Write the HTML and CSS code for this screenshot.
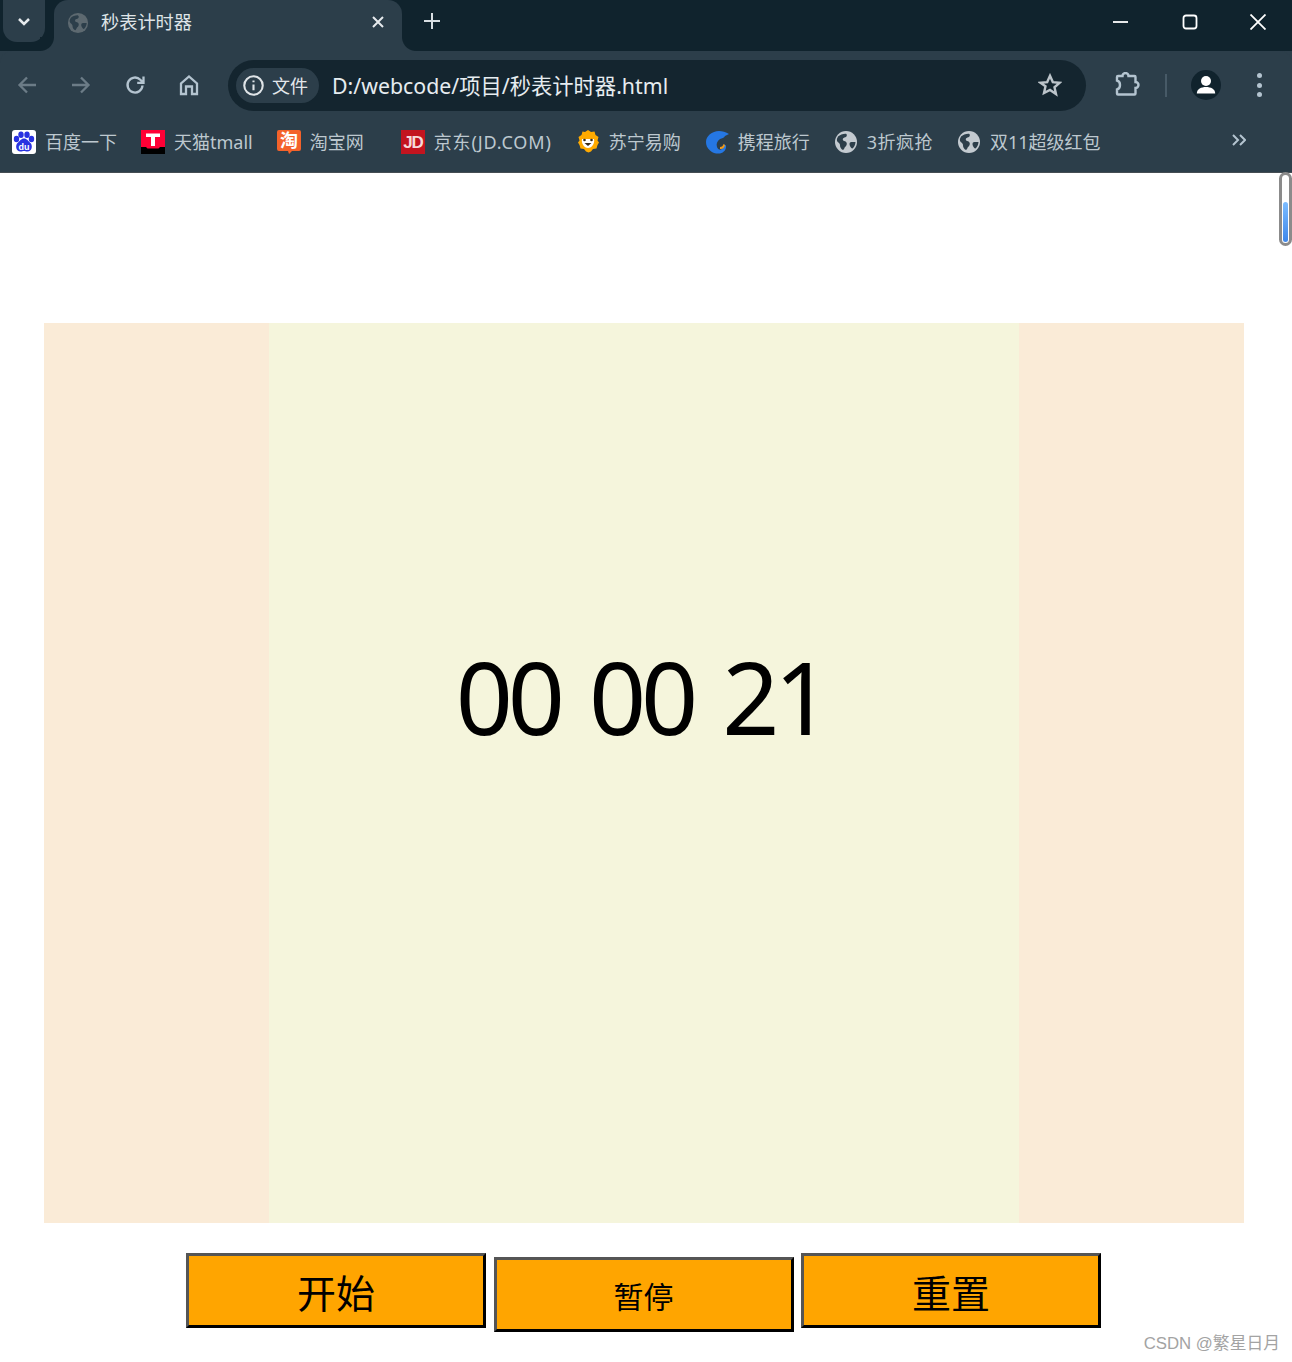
FILE: index.html
```html
<!DOCTYPE html>
<html lang="zh">
<head>
<meta charset="utf-8">
<title>秒表计时器</title>
<link rel="stylesheet" href="styles.css">
</head>
<body>
<svg class="defs" width="0" height="0">
  <symbol id="globe" viewBox="0 0 24 24">
    <circle cx="12" cy="12" r="11" fill="currentColor"/>
    <path class="globe-land" d="M4 6.5c2-1.600 5-3 8-2.800 1 .6 1.200 2 .2 3-1 .9-2.600.6-3.200 1.800-.5 1.100-.1 2 1 2.500 1.500.4 2.600 1 2.800 2.400.1 1.500-.7 2.800-1.900 3.600-.5 1.200-.9 2.300-1.900 3-2-.8-3-2.800-3-4.700 0-1.500-1-2.200-2-3-1-.8-1.300-2.200-1-3.500zM16 12.500c1.500-.8 3-.6 5.500-.5-.2 2.600-1.200 4.900-3 6.600-1.300-.4-2-1.500-2.600-2.800-.4-1.200-.6-2.400.1-3.300z"/>
  </symbol>
</svg>

<header class="chrome">
  <div class="tabstrip">
    <div class="tab-search">
      <svg class="ico-chev" viewBox="0 0 14 9"><path d="M2 2l5 5 5-5"/></svg>
    </div>
    <div class="tab">
      <svg class="tab-globe"><use href="#globe"/></svg>
      <span class="tab-title">秒表计时器</span>
      <svg class="tab-close" viewBox="0 0 12 12"><path d="M1 1l10 10M11 1L1 11"/></svg>
    </div>
    <svg class="tab-new" viewBox="0 0 16 16"><path d="M8 0v16M0 8h16"/></svg>
    <div class="win-controls">
      <svg class="win-btn" viewBox="0 0 16 16"><path d="M0 8h15"/></svg>
      <svg class="win-btn" viewBox="0 0 16 16"><rect x="1.500" y="1.500" width="13" height="13" rx="2.500"/></svg>
      <svg class="win-btn" viewBox="0 0 16 16"><path d="M.5.5l15 15M15.500.5l-15 15"/></svg>
    </div>
  </div>

  <div class="toolbar">
    <div class="nav">
      <svg class="nav-ico dim" viewBox="0 0 24 24"><path d="M21 12H5M12 4.500L4.500 12l7.500 7.500"/></svg>
      <svg class="nav-ico dim" viewBox="0 0 24 24"><path d="M3 12h16M12 4.500l7.500 7.500-7.500 7.500"/></svg>
      <svg class="nav-ico" viewBox="0 0 24 24"><path d="M19.500 12.500a7.500 7.500 0 1 1-2.200-5.800L20 9.300M20.500 3.500v6.300h-6.300"/></svg>
      <svg class="nav-ico" viewBox="0 0 24 24"><path d="M4 21V10.500L12 3.500l8 7V21h-5v-7.500H9V21z"/></svg>
    </div>
    <div class="omnibox">
      <div class="chip">
        <svg class="chip-ico" viewBox="0 0 20 20"><circle cx="10" cy="10" r="8.800"/><path d="M10 9v5.500M10 5.200v1.800"/></svg>
        <span class="chip-text">文件</span>
      </div>
      <span class="url">D:/webcode/项目/秒表计时器.html</span>
      <svg class="star" viewBox="0 0 24 24"><path d="M12 2.800l2.800 6.300 6.800.7-5.100 4.500 1.500 6.800L12 17l-6 3.100 1.500-6.800L2.400 9.800l6.800-.7z"/></svg>
    </div>
    <svg class="puzzle" viewBox="0 0 26 26"><path d="M4 4h4.500a3 3 0 0 1 6 0h6a1 1 0 0 1 1 1v5a3 3 0 0 1 0 6v5.500a1 1 0 0 1-1 1H4a1 1 0 0 1-1-1v-4c2-.5 3-2.500 3-4.500S5 9 3 8.500V5a1 1 0 0 1 1-1z"/></svg>
    <span class="tool-sep"></span>
    <div class="avatar">
      <svg viewBox="0 0 30 30"><circle cx="15" cy="11" r="5"/><path d="M5.800 23.500c0-4.500 4.500-6.500 9.200-6.500s9.200 2 9.200 6.500z"/></svg>
    </div>
    <div class="kebab"><i></i><i></i><i></i></div>
  </div>

  <nav class="bookmarks">
    <a class="bm">
      <svg class="fav" viewBox="0 0 24 24">
        <rect width="24" height="24" rx="3" fill="#fff"/>
        <g fill="#2932e1">
          <ellipse cx="4.500" cy="9" rx="2.700" ry="3.200"/>
          <ellipse cx="9" cy="4.700" rx="2.700" ry="3.300"/>
          <ellipse cx="15" cy="4.700" rx="2.700" ry="3.300"/>
          <ellipse cx="19.500" cy="9" rx="2.700" ry="3.200"/>
          <path d="M12 8.500c3 0 4.200 2.500 6.500 4.500 2.500 2.500 1.500 8.500-3 8.500-1.500 0-2.300-.5-3.500-.5s-2 .5-3.500.5c-4.500 0-5.500-6-3-8.500C7.800 11 9 8.500 12 8.500z"/>
        </g>
        <text class="fav-du" x="12" y="19.500">du</text>
      </svg>
      <span>百度一下</span>
    </a>
    <a class="bm">
      <svg class="fav" viewBox="0 0 24 24">
        <rect width="24" height="24" fill="#ff0036"/>
        <path d="M0 17h5l1.500 1.500h11L19 17h5v7H0z" fill="#000"/>
        <path d="M5 3.500h14v3.500h-5v9h-4V7H5z" fill="#fff"/>
      </svg>
      <span>天猫tmall</span>
    </a>
    <a class="bm">
      <svg class="fav fav-open" viewBox="0 0 24 24">
        <path d="M2 0h20a2 2 0 0 1 2 2v17a2 2 0 0 1-2 2h-7l-3 3-1-3H2a2 2 0 0 1-2-2V2a2 2 0 0 1 2-2z" fill="#f4622a"/>
        <text class="fav-tao" x="12" y="17">淘</text>
      </svg>
      <span class="bm-wide">淘宝网</span>
    </a>
    <a class="bm">
      <svg class="fav fav-open" viewBox="0 0 24 24">
        <rect width="24" height="24" fill="#c3141f"/>
        <text class="fav-jd" x="12" y="18">JD</text>
      </svg>
      <span class="bm-latin">京东(JD.COM)</span>
    </a>
    <a class="bm">
      <svg class="fav" viewBox="0 0 24 24">
        <path d="M12 0l3 2 3.500-.5 1 3.500 3 2-1 3.500 1.500 2-1.500 2.500-1 3.500-3.500.5-2 2.500-2.500 1-2.500-1-2-2.500-3.500-.5-1-3.500-1.500-2.500 1.500-2-1-3.500 3-2 1-3.500L9 2z" fill="#ffaa00"/>
        <path d="M6 9h12c1 4-2 9-6 9S5 13 6 9z" fill="#fff"/>
        <path d="M8.500 13h7l-3.500 3z" fill="#3b2a14"/>
        <circle cx="8.500" cy="10" r="1.300" fill="#3b2a14"/><circle cx="15.500" cy="10" r="1.300" fill="#3b2a14"/>
      </svg>
      <span>苏宁易购</span>
    </a>
    <a class="bm">
      <svg class="fav" viewBox="0 0 24 24">
        <path d="M1 12C1 6 7 1 14 1c3 0 7 1 10 3l-4 2c-1 2-3 2-5 3-3 2-4 5-3 8 .5 2 2.500 3 4 2.500 2-1 3-3 3-5l2 1c.5 4-2 7-6 8-3 .3-7 0-10-3C2 18 1 15 1 12z" fill="#2577e3"/>
        <path d="M15 17c2 0 3-1 3.500-3l1.500 1c-.5 3-2.500 4.500-5 4z" fill="#f09a1a"/>
      </svg>
      <span>携程旅行</span>
    </a>
    <a class="bm">
      <svg class="fav fav-globe"><use href="#globe"/></svg>
      <span class="bm-spaced">3折疯抢</span>
    </a>
    <a class="bm">
      <svg class="fav fav-globe"><use href="#globe"/></svg>
      <span>双11超级红包</span>
    </a>
    <svg class="bm-more" viewBox="0 0 14 12"><path d="M1 1l5 5-5 5M8 1l5 5-5 5"/></svg>
  </nav>
</header>

<div class="scrollbar"><div class="scroll-thumb"></div></div>

<main class="page">
  <section class="stage">
    <div class="clock"><span class="clock-text">00 00 21</span></div>
  </section>
  <div class="controls">
    <button class="btn btn-lg">开始</button>
    <button class="btn btn-sm">暂停</button>
    <button class="btn btn-lg">重置</button>
  </div>
</main>

<div class="watermark">CSDN @繁星日月</div>
</body>
</html>
```

FILE: styles.css
```css
* { box-sizing: border-box; }
html, body { margin: 0; padding: 0; }
body {
  position: relative;
  width: 1292px;
  height: 1362px;
  overflow: hidden;
  background: #fff;
  font-family: "Noto Sans", "Noto Sans CJK SC", sans-serif;
}
.defs { position: absolute; }
.globe-land { fill: #2c3e4a; }

.chrome { background: #2c3e4a; height: 173px; border-bottom: 1px solid #454d53; }

.tabstrip {
  display: flex;
  align-items: flex-start;
  height: 51px;
  background: #10232d;
  position: relative;
}
.tab-search {
  width: 42px;
  height: 42px;
  margin-left: 3px;
  background: #2c3e4a;
  border-radius: 0 0 14px 14px;
  display: flex;
  align-items: center;
  justify-content: center;
}
.ico-chev { width: 14px; height: 9px; fill: none; stroke: #e6eaed; stroke-width: 2.500; }
.tab {
  position: relative;
  width: 348px;
  height: 51px;
  margin-left: 9px;
  padding-left: 13px;
  background: #2c3e4a;
  border-radius: 14px 14px 0 0;
  display: flex;
  align-items: center;
}
.tab::before, .tab::after {
  content: "";
  position: absolute;
  bottom: 0;
  width: 14px;
  height: 14px;
}
.tab::before { left: -14px; background: radial-gradient(circle at 0 0, #10232d 13.500px, #2c3e4a 14.500px); }
.tab::after { right: -14px; background: radial-gradient(circle at 100% 0, #10232d 13.500px, #2c3e4a 14.500px); }
.tab-globe { width: 22px; height: 22px; color: #5d6970; margin-top: -6px; }
.tab-title { margin-left: 12px; margin-top: -8px; font-size: 18.200px; line-height: 24px; color: #dfe4e7; white-space: nowrap; }
.tab-close {
  position: absolute;
  right: 18px;
  top: 16px;
  width: 12px;
  height: 12px;
  fill: none;
  stroke: #e6eaed;
  stroke-width: 2;
}
.tab-new {
  width: 16px;
  height: 16px;
  margin: 13px 0 0 22px;
  fill: none;
  stroke: #d8dee2;
  stroke-width: 2;
}
.win-controls {
  margin-left: auto;
  display: flex;
  gap: 52.500px;
  padding: 14px 26px 0 0;
}
.win-btn { width: 16px; height: 16px; fill: none; stroke: #fff; stroke-width: 1.800; }

.toolbar {
  position: relative;
  display: flex;
  align-items: center;
  height: 68px;
  background: #2c3e4a;
  border-radius: 12px 12px 0 0;
  margin-top: 0;
  padding: 0 20px 0 15px;
}
.nav { display: flex; gap: 30px; width: 213px; }
.nav-ico { width: 24px; height: 24px; fill: none; stroke: #b4c4d0; stroke-width: 2.300; }
.nav-ico.dim { stroke: #6c7c87; }

.omnibox {
  width: 858px;
  height: 51px;
  background: #14252f;
  border-radius: 26px;
  display: flex;
  align-items: center;
  padding: 0 24px 0 8px;
}
.chip {
  display: flex;
  align-items: center;
  height: 35px;
  padding: 0 11px 0 7px;
  background: #2c3e4a;
  border-radius: 18px;
}
.chip-ico { width: 21px; height: 21px; fill: none; stroke: #dfe4e7; stroke-width: 2; }
.chip-text { margin-left: 8px; font-size: 18px; color: #e3e7ea; }
.url { margin: -2px 0 0 13px; font-size: 21.300px; color: #e6ecf0; white-space: nowrap; }
.star { margin-left: auto; width: 24px; height: 24px; fill: none; stroke: #bcc4ca; stroke-width: 2.400; }
.puzzle { width: 26px; height: 26px; margin-left: 28px; fill: none; stroke: #b4c4d0; stroke-width: 2.400; }
.tool-sep { width: 2px; height: 23px; margin-left: 25px; background: #475a67; }
.avatar {
  width: 30px;
  height: 30px;
  margin-left: 24px;
  border-radius: 50%;
  background: #10232d;
}
.avatar svg { display: block; width: 30px; height: 30px; fill: #fff; }
.kebab { display: flex; flex-direction: column; gap: 4.500px; margin-left: 36px; }
.kebab i { display: block; width: 5px; height: 5px; border-radius: 50%; background: #b4c4d0; }

.bookmarks {
  position: relative;
  display: flex;
  align-items: center;
  gap: 24px;
  height: 53px;
  padding: 0 0 8px 12px;
  margin-top: 0;
}
.bm { display: flex; align-items: center; gap: 9px; color: #bdc8cf; font-size: 18px; line-height: 24px; white-space: nowrap; }
.bm-wide { padding-right: 13px; }
.bm-latin { letter-spacing: .85px; }
.bm-spaced { letter-spacing: .5px; }
.fav { width: 24px; height: 24px; display: block; flex: none; }
.fav-open { overflow: visible; }
.fav-globe { color: #c3cad0; }
.fav-du { fill: #fff; font: bold 9px "Liberation Sans", sans-serif; text-anchor: middle; }
.fav-tao { fill: #fff; font: bold 18px "Noto Sans CJK SC", sans-serif; text-anchor: middle; }
.fav-jd { fill: #f6d9da; font: bold 17px "Liberation Sans", sans-serif; text-anchor: middle; letter-spacing: -1px; }
.bm-more {
  position: absolute;
  left: 1232px;
  top: 15px;
  width: 14px;
  height: 12px;
  fill: none;
  stroke: #b4c4d0;
  stroke-width: 2;
}

.scrollbar {
  position: absolute;
  left: 1279px;
  top: 172px;
  width: 13px;
  height: 74px;
  border: 3px solid #8b8b8b;
  border-radius: 7px;
  background: #fff;
}
.scroll-thumb {
  position: absolute;
  left: 1px;
  right: 1px;
  top: 27px;
  bottom: 1px;
  border-radius: 4px;
  background: linear-gradient(#7cbcff, #3f87ea);
}

.page { padding: 150px 48px 0 44px; }
.stage { width: 1200px; height: 900px; background: #faebd7; display: flex; justify-content: center; }
.clock {
  width: 750px;
  height: 900px;
  background: #f5f5dc;
  color: #000;
  text-align: center;
  line-height: 746px;
}
.clock-text { font-size: 100px; letter-spacing: -5.200px; word-spacing: 8.500px; padding-right: 6px; font-family: "Noto Sans", sans-serif; }

.controls {
  width: 1200px;
  padding-right: 1px;
  margin-top: 30px;
  display: flex;
  justify-content: center;
  align-items: baseline;
  gap: 7.500px;
}
.btn {
  width: 300px;
  height: 75px;
  padding: 0;
  border: 3px outset #555;
  border-color: #555 #000 #000 #555;
  background: #ffa500;
  color: #000;
  font-family: "Noto Sans CJK SC", sans-serif;
}
.btn-lg { font-size: 39px; }
.btn-sm { font-size: 30px; }

.watermark {
  position: absolute;
  right: 12px;
  bottom: 6px;
  font-size: 16.800px;
  line-height: 24px;
  color: #a3a3a3;
  font-family: "Liberation Sans", "Noto Sans CJK SC", sans-serif;
}
```
